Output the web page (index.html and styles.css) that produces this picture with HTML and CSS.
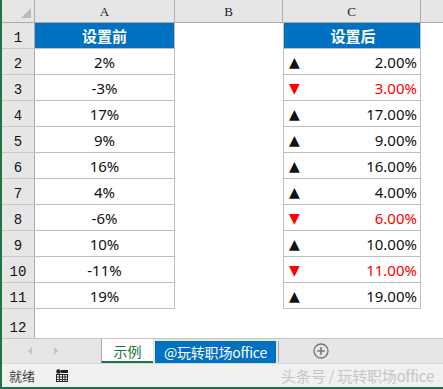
FILE: index.html
```html
<!DOCTYPE html>
<html lang="zh-CN">
<head>
  <meta charset="UTF-8">
  <title>示例</title>
  <link rel="stylesheet" href="styles.css">
</head>
<body>
  <div class="app">
    <!-- 表格区域 -->
    <div class="sheet">
      <div class="corner"><span class="corner-tri"></span></div>
      <div class="colhead">A</div>
      <div class="colhead">B</div>
      <div class="colhead">C</div>
      <div class="colhead last"></div>

      <div class="rh">1</div>
      <div class="ca head">设置前</div>
      <div class="cb"></div>
      <div class="cc head">设置后</div>
      <div class="cx"></div>

      <div class="rh">2</div>
      <div class="ca">2%</div>
      <div class="cb"></div>
      <div class="cc"><span class="mark">▲</span><span>2.00%</span></div>
      <div class="cx"></div>

      <div class="rh">3</div>
      <div class="ca">-3%</div>
      <div class="cb"></div>
      <div class="cc down"><span class="mark">▼</span><span>3.00%</span></div>
      <div class="cx"></div>

      <div class="rh">4</div>
      <div class="ca">17%</div>
      <div class="cb"></div>
      <div class="cc"><span class="mark">▲</span><span>17.00%</span></div>
      <div class="cx"></div>

      <div class="rh">5</div>
      <div class="ca">9%</div>
      <div class="cb"></div>
      <div class="cc"><span class="mark">▲</span><span>9.00%</span></div>
      <div class="cx"></div>

      <div class="rh">6</div>
      <div class="ca">16%</div>
      <div class="cb"></div>
      <div class="cc"><span class="mark">▲</span><span>16.00%</span></div>
      <div class="cx"></div>

      <div class="rh">7</div>
      <div class="ca">4%</div>
      <div class="cb"></div>
      <div class="cc"><span class="mark">▲</span><span>4.00%</span></div>
      <div class="cx"></div>

      <div class="rh">8</div>
      <div class="ca">-6%</div>
      <div class="cb"></div>
      <div class="cc down"><span class="mark">▼</span><span>6.00%</span></div>
      <div class="cx"></div>

      <div class="rh">9</div>
      <div class="ca">10%</div>
      <div class="cb"></div>
      <div class="cc"><span class="mark">▲</span><span>10.00%</span></div>
      <div class="cx"></div>

      <div class="rh">10</div>
      <div class="ca">-11%</div>
      <div class="cb"></div>
      <div class="cc down"><span class="mark">▼</span><span>11.00%</span></div>
      <div class="cx"></div>

      <div class="rh">11</div>
      <div class="ca">19%</div>
      <div class="cb"></div>
      <div class="cc"><span class="mark">▲</span><span>19.00%</span></div>
      <div class="cx"></div>

      <div class="rh end">12</div>
      <div class="blank"></div>
      <div class="blank"></div>
      <div class="blank"></div>
      <div class="blank"></div>
    </div>

    <!-- 工作表标签 -->
    <div class="tabs">
      <div class="nav">
        <span class="arrow left"></span>
        <span class="arrow right"></span>
      </div>
      <div class="tab active">示例</div>
      <div class="tab blue">@玩转职场office</div>
      <div class="tab-sep"></div>
      <div class="add">
        <svg width="16" height="16" viewBox="0 0 16 16">
          <circle cx="8" cy="8" r="7" fill="none" stroke="#767676" stroke-width="1.3"/>
          <path d="M8 4.3v7.4M4.3 8h7.4" stroke="#767676" stroke-width="1.6"/>
        </svg>
      </div>
    </div>

    <!-- 状态栏 -->
    <div class="status">
      <span class="ready">就绪</span>
      <svg class="macro" width="12" height="13" viewBox="0 0 12 13">
        <circle cx="2.5" cy="2.5" r="2.3" fill="#222"/>
        <rect x="5" y="1" width="7" height="3" fill="#222"/>
        <rect x="0.5" y="5.5" width="11" height="7" fill="none" stroke="#222"/>
        <path d="M0 8h12M0 10.5h12M3.5 5v8M6.5 5v8M9 5v8" stroke="#222" stroke-width="0.9"/>
      </svg>
      <span class="mark-text">头条号 / 玩转职场office</span>
    </div>
  </div>
</body>
</html>
```

FILE: styles.css
```css
body { margin:0; background:#fff; font-family:'Noto Sans', 'Noto Sans CJK SC', sans-serif; }
.app { width:441px; height:387px; border-left:2px solid #217346; border-bottom:2px solid #217346; display:flex; flex-direction:column; overflow:hidden; }

/* grid */
.sheet { display:grid; grid-template-columns:33px 140px 108px 138px 1fr; grid-template-rows:23px repeat(11, 26px) 29px; }
.sheet > div { box-sizing:border-box; }
.corner { background:#e6e6e6; border-right:1px solid #ababab; border-bottom:1px solid #ababab; position:relative; }
.corner-tri { position:absolute; right:3px; bottom:4px; width:0; height:0; border-left:10px solid transparent; border-bottom:10px solid #bcbcbc; }
.colhead { background:#e6e6e6; border-right:1px solid #ababab; border-bottom:1px solid #ababab; display:flex; align-items:center; justify-content:center; font-family:'Liberation Serif', serif; font-size:13px; color:#222; padding-top:2px; }
.colhead.last { border-right:0; }
.rh { background:#e6e6e6; border-right:1px solid #ababab; border-bottom:1px solid #c8c8c8; display:flex; align-items:flex-end; justify-content:center; padding-bottom:2px; font-family:'Liberation Mono', monospace; font-size:14px; color:#111; }
.rh.end { border-bottom:0; }
.ca { border-right:1px solid #bfbfbf; border-bottom:1px solid #bfbfbf; display:flex; align-items:center; justify-content:center; font-size:15px; color:#111; }
.cc { border-left:1px solid #bfbfbf; border-right:1px solid #bfbfbf; border-bottom:1px solid #bfbfbf; display:flex; align-items:center; justify-content:space-between; padding:0 3px 0 5px; font-size:15px; color:#111; }
.ca.head, .cc.head { background:#0070c0; color:#fff; font-family:'Noto Sans CJK SC', sans-serif; font-weight:700; font-size:15px; justify-content:center; }
.cc.down { color:#ff0000; }
.mark { font-family:'DejaVu Sans', sans-serif; font-size:14px; }

/* sheet tabs */
.tabs { height:25px; box-sizing:border-box; border-top:1px solid #c6c6c6; background:#e6e6e6; display:flex; align-items:stretch; }
.nav { width:99px; display:flex; align-items:center; padding-left:26px; gap:22px; box-sizing:border-box; }
.arrow { width:0; height:0; border-top:4px solid transparent; border-bottom:4px solid transparent; }
.arrow.left { border-right:4px solid #c4c4c4; }
.arrow.right { border-left:4px solid #c4c4c4; }
.tab { display:flex; align-items:center; justify-content:center; font-family:'Noto Sans CJK SC', sans-serif; font-size:14px; box-sizing:border-box; }
.tab.active { width:52px; background:#fff; color:#217346; border-left:1px solid #ababab; border-bottom:2px solid #217346; padding-top:1px; }
.tab.blue { width:121px; margin:2px 0 0 2px; background:#0070c0; color:#fff; letter-spacing:-0.2px; }
.tab-sep { width:1px; background:#ababab; margin:2px 0 1px 2px; }
.add { margin-left:34px; display:flex; align-items:center; }

/* status bar */
.status { flex:1; background:#f1f1f1; border-top:1px solid #dadada; display:flex; align-items:center; padding:0 9px 0 7px; font-family:'Noto Sans CJK SC', sans-serif; }
.ready { font-size:13px; color:#444; }
.macro { margin-left:21px; }
.mark-text { margin-left:auto; font-size:15px; color:#c6c6c6; letter-spacing:-0.2px; }
```
